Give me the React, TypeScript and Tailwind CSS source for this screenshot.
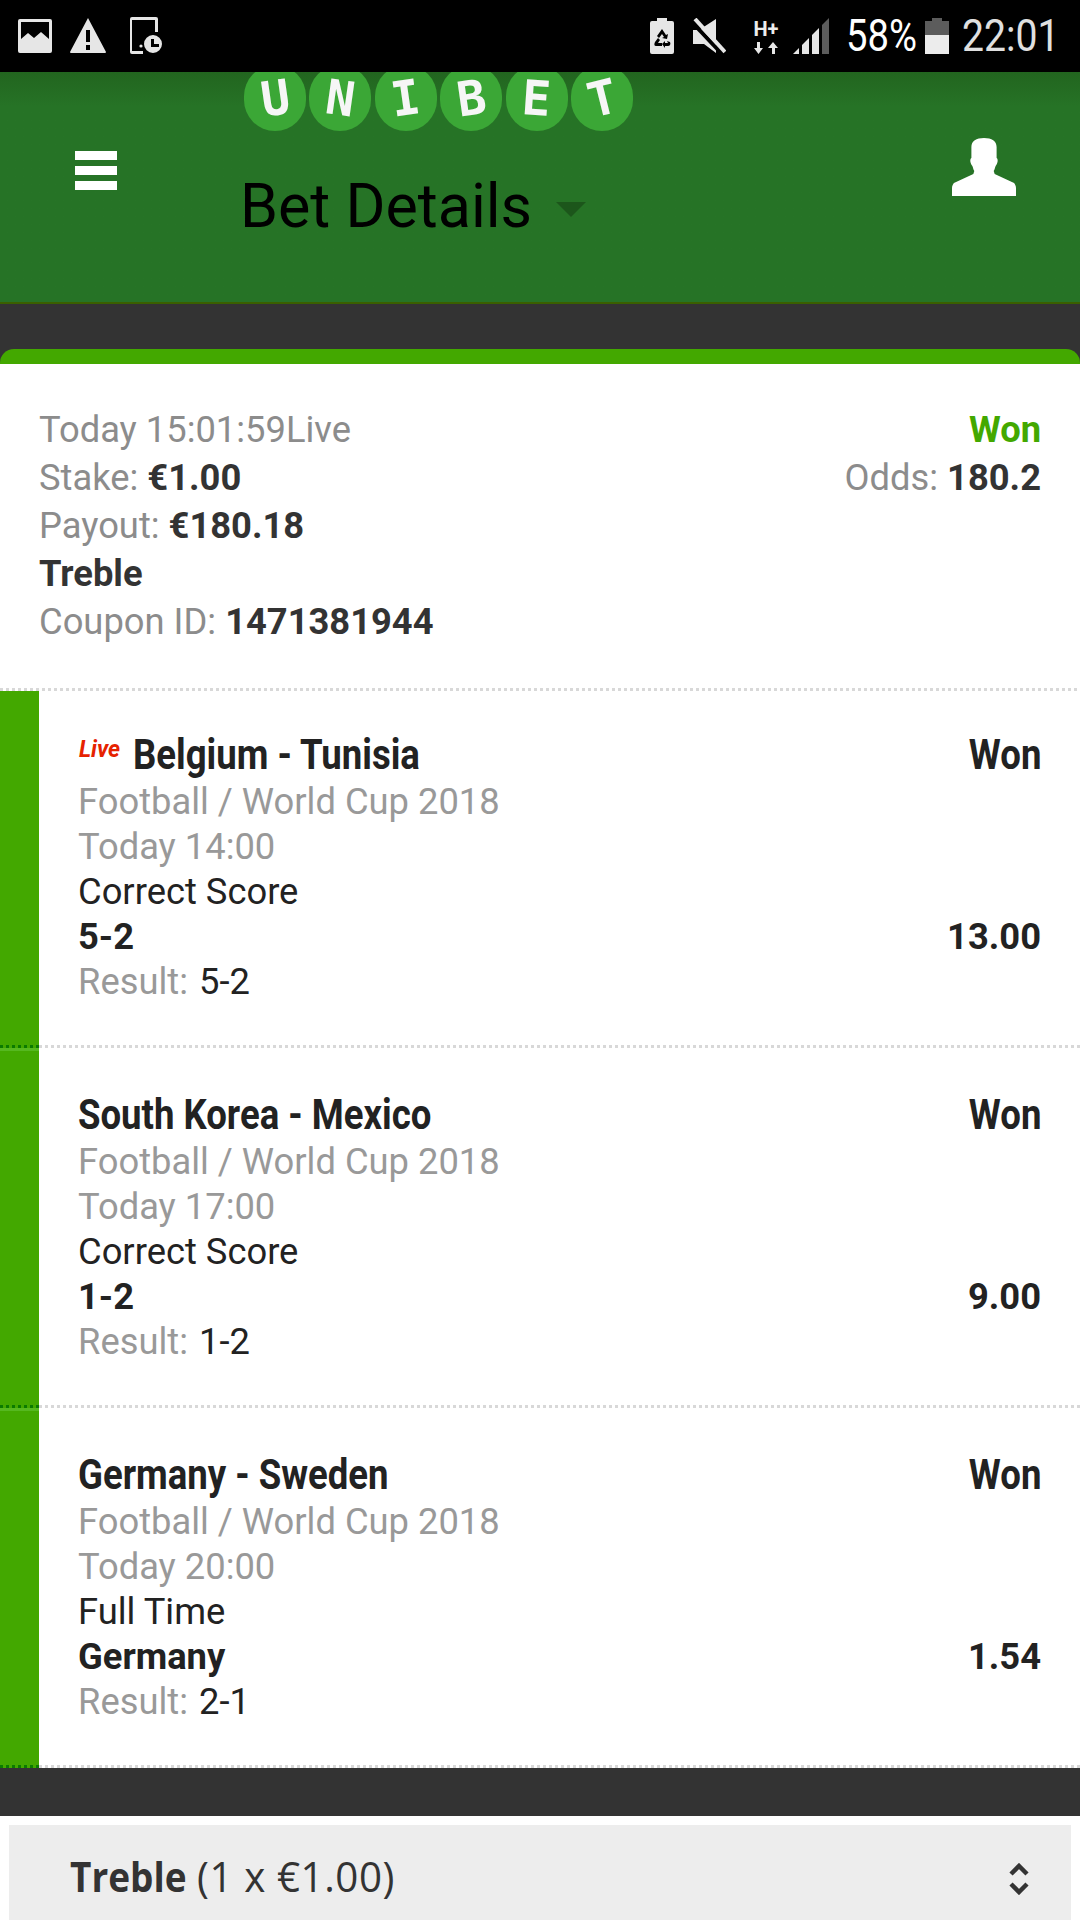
import React from 'react';

const font = { fontFamily: 'Roboto, sans-serif' };

const bets = [
  { title: 'Belgium - Tunisia', live: true, time: 'Today 14:00', market: 'Correct Score', pick: '5-2', odds: '13.00', result: '5-2' },
  { title: 'South Korea - Mexico', live: false, time: 'Today 17:00', market: 'Correct Score', pick: '1-2', odds: '9.00', result: '1-2' },
  { title: 'Germany - Sweden', live: false, time: 'Today 20:00', market: 'Full Time', pick: 'Germany', odds: '1.54', result: '2-1' },
];

function StatusBar() {
  return (
    <div className="relative z-10 h-[72px] bg-black flex items-center justify-between pl-[17px] pr-[24px] shrink-0">
      <div className="flex items-center">
        <svg width="36" height="36" viewBox="0 0 36 36" fill="#e6e6e6">
          <path fillRule="evenodd" d="M3 1h30a2 2 0 0 1 2 2v30a2 2 0 0 1-2 2H3a2 2 0 0 1-2-2V3a2 2 0 0 1 2-2zm1 3v17l7-6 6 5 7-6 8 7V4z" />
        </svg>
        <svg width="38" height="36" viewBox="0 0 38 36" fill="#e6e6e6" className="ml-[16px]">
          <path fillRule="evenodd" d="M19 0l18 34a1 1 0 0 1-1 1H2a1 1 0 0 1-1-1zm-2 12v12h4V12zm0 15v5h4v-5z" />
        </svg>
        <svg width="34" height="38" viewBox="0 0 34 38" fill="#e6e6e6" className="ml-[22px]">
          <path d="M3 0h24a2 2 0 0 1 2 2v13h-3V3H3v31h11v3H3a2 2 0 0 1-2-2V2a2 2 0 0 1 2-2z" />
          <circle cx="12" cy="29" r="1.6" />
          <path fillRule="evenodd" d="M24 18a9 9 0 1 1 0 18 9 9 0 0 1 0-18zm-2 4v8h8v-3h-5v-5z" />
        </svg>
      </div>
      <div className="flex items-center text-[#ececec]">
        <svg width="24" height="36" viewBox="0 0 24 36">
          <path d="M7 0h10v3h5a2 2 0 0 1 2 2v29a2 2 0 0 1-2 2H2a2 2 0 0 1-2-2V5a2 2 0 0 1 2-2h5z" fill="#e6e6e6" />
          <path d="M12 11l4 6 2-1-1 5-5-1 2-1-2-3-3 4-2-2zM5 24l3-4 2 2-2 3h4v3H6c-2 0-2-2-1-4zM20 24c1 2 0 4-2 4h-3v2l-3-4 3-3v2h3l-1-2z" fill="#000" />
        </svg>
        <svg width="34" height="36" viewBox="0 0 34 36" className="ml-[18px]">
          <path d="M1 12h6L24 1v34l-12-9H1z" fill="#e6e6e6" />
          <path d="M0 4l31 33" stroke="#000" strokeWidth="4" />
          <path d="M3 1l30 33" stroke="#e6e6e6" strokeWidth="4" />
        </svg>
        <div className="ml-[27px] w-[26px] h-[36px] flex flex-col items-center">
          <span className="text-[20px] font-bold whitespace-nowrap" style={{ ...font, lineHeight: '22px' }}>H+</span>
          <svg width="26" height="12" viewBox="0 0 26 12" fill="#e6e6e6" className="mt-[2px]">
            <path d="M4 0h3v6h3l-4.500 6L1 6h3zM16 6h3v6h3V6h3L20 0l-5 6z" />
          </svg>
        </div>
        <svg width="36" height="36" viewBox="0 0 36 36" className="ml-[14px]">
          <path d="M0 36l6-6v6z" fill="#e6e6e6" />
          <path d="M9 36V27l7-7v16z" fill="#e6e6e6" />
          <path d="M19 36V17l7-7v26z" fill="#e6e6e6" />
          <path d="M29 36V7l7-7v36z" fill="#5c5c5c" />
        </svg>
        <div className="ml-[17px] w-[70px]">
          <span className="inline-block origin-left scale-x-[0.85] text-[45px] whitespace-nowrap text-white" style={{ ...font, lineHeight: '46px' }}>58%</span>
        </div>
        <svg width="24" height="36" viewBox="0 0 24 36" className="ml-[9px]">
          <path d="M7 0h10v3h7v14H0V3h7z" fill="#5c5c5c" />
          <rect y="17" width="24" height="19" fill="#ececec" />
        </svg>
        <div className="ml-[13px] w-[94px]">
          <span className="inline-block origin-left scale-x-[0.87] text-[45px] whitespace-nowrap text-[#e0e0e0]" style={{ ...font, lineHeight: '46px' }}>22:01</span>
        </div>
      </div>
    </div>
  );
}

function Logo() {
  const letters = [
    { ch: 'U', cls: '-rotate-[8deg]' },
    { ch: 'N', cls: 'rotate-[8deg]' },
    { ch: 'I', cls: '-rotate-[8deg]' },
    { ch: 'B', cls: '-rotate-[8deg]' },
    { ch: 'E', cls: 'rotate-[4deg]' },
    { ch: 'T', cls: '-rotate-[14deg]' },
  ];
  return (
    <div className="flex gap-[3.4px] -mt-[7px]">
      {letters.map((l) => (
        <div key={l.ch} className="w-[62px] h-[66px] rounded-full bg-[#3ba736] flex items-center justify-center">
          <span
            className={`block text-[48px] font-bold text-[#f6f6f6] ${l.cls}`}
            style={{ fontFamily: '"DejaVu Sans Mono", monospace', lineHeight: '40px' }}
          >
            {l.ch}
          </span>
        </div>
      ))}
    </div>
  );
}

function Header() {
  return (
    <div className="h-[232px] shrink-0 border-b-2 border-[#3a5f00] bg-gradient-to-b from-[#22651f] to-[#267326] to-[15%] flex" style={font}>
      <div className="w-[75px] shrink-0" />
      <div className="w-[42px] shrink-0 pt-[79px] flex flex-col gap-[6px]">
        <div className="h-[9px] bg-white" />
        <div className="h-[9px] bg-white" />
        <div className="h-[9px] bg-white" />
      </div>
      <div className="ml-[127px] flex-1 flex flex-col">
        <Logo />
        <div className="flex items-center mt-[41px] -ml-[4px]">
          <span className="text-[61px] text-black" style={{ lineHeight: '68px' }}>Bet Details</span>
          <div className="ml-[24px] mt-[6px] w-0 h-0 border-x-[15px] border-x-transparent border-t-[15px] border-t-[#1c561b]" />
        </div>
      </div>
      <div className="w-[64px] mr-[64px] shrink-0 pt-[66px]">
        <svg width="64" height="58" viewBox="0 0 66 58" preserveAspectRatio="none" fill="#fff">
          <path d="M33 0c8 0 13 3 13 9v11c2 1 1 6-1 8-1 2-1 4-2 5l1 3 20 9c1 1 2 3 2 5v8H0v-8c0-2 1-4 2-5l20-9 1-3c-1-1-1-3-2-5-2-2-3-7-1-8V9c0-6 5-9 13-9z" />
        </svg>
      </div>
    </div>
  );
}

function Divider({ onGreen }: { onGreen?: boolean }) {
  return (
    <div className="h-[3px] shrink-0 flex">
      {onGreen && (
        <div className="w-[39px] shrink-0 bg-[#43a800] bg-[repeating-linear-gradient(90deg,#0b7a00_0_3px,transparent_3px_6px)]" />
      )}
      <div className="flex-1 bg-[repeating-linear-gradient(90deg,#d8d8d8_0_3px,transparent_3px_6px)]" />
    </div>
  );
}

function BetRow({ bet, first }: { bet: (typeof bets)[number]; first: boolean }) {
  return (
    <div className="flex flex-col shrink-0">
      <div className={`flex ${first ? 'h-[354px]' : 'h-[357px]'}`}>
        <div className="w-[39px] shrink-0 bg-[#43a800]">
          {!first && <div className="h-[3px] bg-[#56b820]" />}
        </div>
        <div className={`flex-1 flex justify-between pl-[39px] pr-[39px] ${first ? 'pt-[39px]' : 'pt-[42px]'}`}>
          <div className="flex flex-col text-[36.35px] leading-[45px]">
            <div className="flex items-center h-[49px]">
              {bet.live && (
                <span className="ml-[1px] text-[23px] italic font-bold text-[#e62200] mr-[13px] -mt-[10px]">Live</span>
              )}
              <span className="inline-block whitespace-nowrap text-[42px] font-bold text-[#222] origin-left scale-x-[0.87] w-[300px]">{bet.title}</span>
            </div>
            <span className="text-[#999]">Football / World Cup 2018</span>
            <span className="text-[#999]">{bet.time}</span>
            <span className="text-[#222]">{bet.market}</span>
            <span className="font-bold text-[#222]">{bet.pick}</span>
            <span>
              <span className="text-[#999]">Result: </span>
              <span className="text-[#222] ml-[2px]">{bet.result}</span>
            </span>
          </div>
          <div className="flex flex-col items-end text-[36.35px] leading-[45px] font-bold text-[#222]">
            <span className="inline-block h-[49px] text-[42px] leading-[49px] origin-right scale-x-[0.87]">Won</span>
            <span className="mt-[135px]">{bet.odds}</span>
          </div>
        </div>
      </div>
      <Divider onGreen />
    </div>
  );
}

export default function App() {
  return (
    <div className="w-[1080px] h-[1920px] overflow-hidden bg-white flex flex-col" style={font}>
      <StatusBar />
      <Header />
      <div className="bg-[#333333] shrink-0">
        <div className="h-[45px]" />
        <div className="h-[15px] rounded-t-[14px] bg-[#43a800]" />
      </div>
      <div className="h-[324px] shrink-0 pt-[42px] px-[39px] flex justify-between text-[36.35px] leading-[48px] text-[#8c8c8c]">
        <div className="flex flex-col">
          <span>Today 15:01:59Live</span>
          <span>Stake: <b className="font-bold text-[#333]">€1.00</b></span>
          <span>Payout: <b className="font-bold text-[#333]">€180.18</b></span>
          <span className="font-bold text-[#333]">Treble</span>
          <span>Coupon ID: <b className="font-bold text-[#333]">1471381944</b></span>
        </div>
        <div className="flex flex-col items-end">
          <span className="font-bold text-[#43a800]">Won</span>
          <span>Odds: <b className="font-bold text-[#333]">180.2</b></span>
        </div>
      </div>
      <Divider />
      {bets.map((bet, i) => (
        <BetRow key={bet.title} bet={bet} first={i === 0} />
      ))}
      <div className="h-[48px] bg-[#333333] shrink-0" />
      <div className="mt-[9px] mx-[9px] flex-1 bg-[#ededed] flex items-center justify-between pl-[61px] pr-[42px] pt-[6px]">
        <span
          className="flex items-baseline whitespace-nowrap text-[42px] text-[#333]"
          style={{ fontFamily: '"Open Sans", sans-serif' }}
        >
          <b className="inline-block w-[127px] font-bold origin-left scale-x-[0.88]">Treble</b>
          <span className="tracking-[0.6px] inline-block origin-left scale-x-[0.96]">(1 x €1.00)</span>
        </span>
        <svg width="20" height="32" viewBox="0 0 20 32" fill="none" stroke="#333" strokeWidth="4.5" className="mt-[6px]">
          <path d="M2 11l8-8 8 8M2 21l8 8 8-8" />
        </svg>
      </div>
    </div>
  );
}
